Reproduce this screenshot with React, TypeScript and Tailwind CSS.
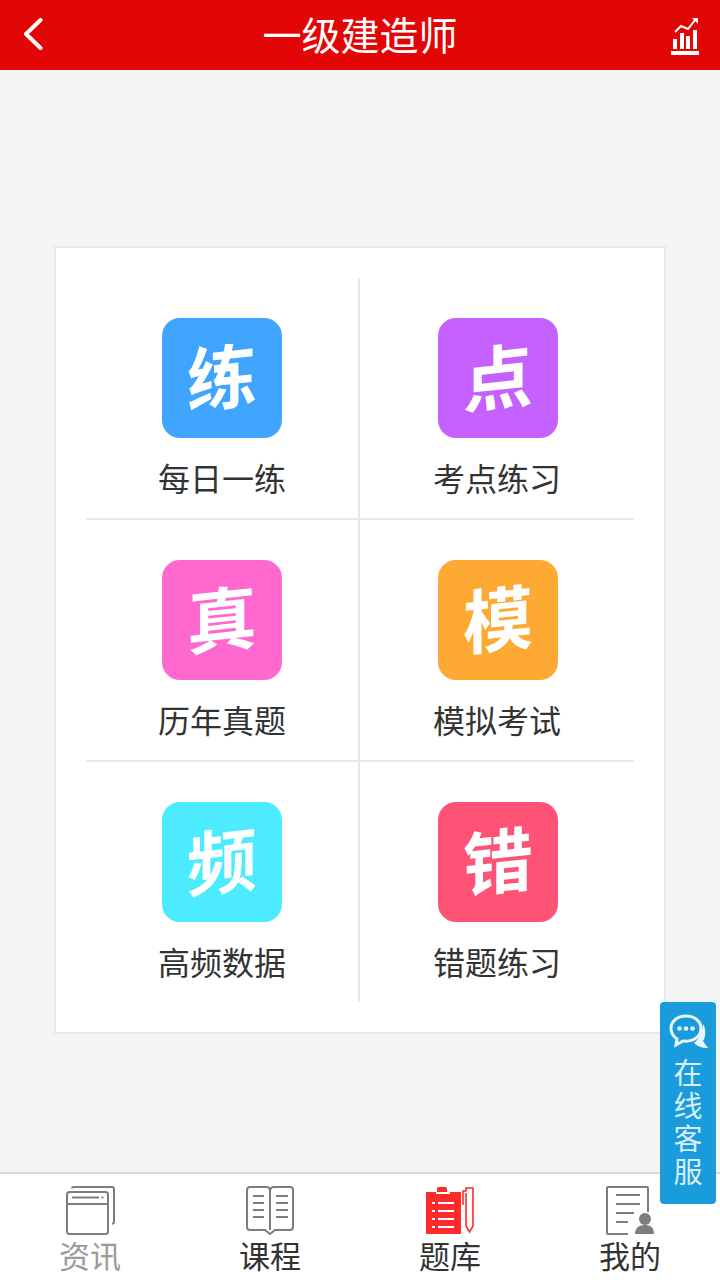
const cjk = "font-['Noto_Sans_CJK_SC','Liberation_Sans',sans-serif]";

const items = [
  { glyph: '练', label: '每日一练', color: 'bg-[#3fa5ff]' },
  { glyph: '点', label: '考点练习', color: 'bg-[#c562ff]' },
  { glyph: '真', label: '历年真题', color: 'bg-[#ff68cf]' },
  { glyph: '模', label: '模拟考试', color: 'bg-[#ffa935]' },
  { glyph: '频', label: '高频数据', color: 'bg-[#4cebff]' },
  { glyph: '错', label: '错题练习', color: 'bg-[#ff5277]' },
];

function Cell({ glyph, label, color, index }: { glyph: string; label: string; color: string; index: number }) {
  const isLeft = index % 2 === 0;
  const isLastRow = index >= 4;
  return (
    <div
      className={`flex flex-col items-center pt-10 ${isLastRow ? 'h-[240px]' : 'h-[242px] border-b-2 border-[#e8e8e8]'} ${
        isLeft ? 'w-[274px] border-r-2 border-r-[#e8e8e8]' : 'w-[274px]'
      }`}
    >
      <div className={`w-[120px] h-[120px] rounded-[18px] flex items-center justify-center pb-[8px] ${color} ${isLeft ? '' : 'ml-[2px]'}`}>
        <span className="text-white text-[70px] leading-none font-bold -skew-y-6">{glyph}</span>
      </div>
      <p className="mt-[20px] text-[32px] leading-[38px] text-[#333333]">{label}</p>
    </div>
  );
}

function NewsIcon() {
  return (
    <svg width="50" height="50" viewBox="0 0 50 50" fill="none" stroke="#7d7d7d" strokeWidth="2" className="ml-[1px]">
      <path d="M6 2.5 C6 1.6 7 1 8 1 H46 C47 1 48 2 48 3 V36 C48 37 47.5 37.5 46 38" />
      <rect x="1" y="6" width="41" height="42" rx="2.5" />
      <path d="M1 18 H42" />
      <path d="M6 11.5 H33" />
      <path d="M35.5 11.5 H37.5" />
    </svg>
  );
}

function BookIcon() {
  return (
    <svg width="48" height="50" viewBox="0 0 48 50" fill="none" stroke="#7d7d7d" strokeWidth="2">
      <path d="M24 5 C24 2 22 1 20 1 H4 C2 1 1 2 1 4 V41 C1 43 2 44 4 44 H19 L24 48 L29 44 H44 C46 44 47 43 47 41 V4 C47 2 46 1 44 1 H28 C26 1 24 2 24 5 V44" />
      <path d="M7 10 H18 M7 17 H18 M7 24 H18 M7 31 H18 M30 10 H42 M30 17 H42 M30 24 H42 M30 31 H42" />
    </svg>
  );
}

function ExamIcon() {
  return (
    <svg width="50" height="50" viewBox="0 0 50 50">
      <path d="M1 6 H12 V3 C12 1.5 13 1 14 1 H20 C21 1 22 1.5 22 3 V6 H36 V48 H1 Z" fill="#ff2a2a" />
      <path d="M11 7 H25" stroke="#fff" strokeWidth="2" />
      <path d="M7 17 H10 M13 17 H29 M7 25 H10 M13 25 H29 M7 33 H10 M13 33 H29 M7 41 H10 M13 41 H29" stroke="#fff" strokeWidth="2" />
      <path d="M41 7 V40 L44.5 46 L48 40 V2 H41 V5 H38 V19" fill="none" stroke="#ff2a2a" strokeWidth="1.6" />
    </svg>
  );
}

function MineIcon() {
  return (
    <svg width="48" height="50" viewBox="0 0 48 50" fill="none">
      <path d="M22 48 H2 C1.4 48 1 47.6 1 47 V2 C1 1.4 1.4 1 2 1 H41 C41.6 1 42 1.4 42 2 V26" stroke="#7d7d7d" strokeWidth="2" />
      <path d="M10 9 H34 M10 18 H34 M10 27 H28 M10 36 H22" stroke="#7d7d7d" strokeWidth="2" />
      <circle cx="39" cy="33" r="6" fill="#7d7d7d" />
      <path d="M29 48 C29 42 33 39 39 39 C45 39 48 42 48 48 Z" fill="#7d7d7d" />
    </svg>
  );
}

export default function App() {
  return (
    <div className={`relative w-[720px] h-[1280px] overflow-hidden flex flex-col bg-[#f4f4f4] ${cjk}`}>
      {/* 顶部 */}
      <header className="h-[70px] shrink-0 bg-[#e20606] flex items-center justify-between pl-[23px] pr-[20px]">
        <svg width="20" height="32" viewBox="0 0 20 32" fill="none" stroke="#fff" strokeWidth="4" strokeLinecap="round" strokeLinejoin="round" className="mb-[2px]">
          <path d="M17.5 2 L3 16 L17.5 30" />
        </svg>
        <h1 className="ml-[7px] text-white text-[39px] leading-none mb-[3px]">一级建造师</h1>
        <svg width="30" height="40" viewBox="0 0 30 40" fill="#fff">
          <rect x="3" y="24" width="4" height="10" />
          <rect x="10" y="18" width="4" height="16" />
          <rect x="16" y="21" width="4" height="13" />
          <rect x="23" y="15" width="4" height="19" />
          <rect x="1" y="36" width="28" height="4" />
          <path d="M5 17 L11 11 L18 14 L25 5" fill="none" stroke="#fff" strokeWidth="2" />
          <path d="M22 3 H28 V9 Z" />
        </svg>
      </header>

      {/* 题库入口 */}
      <main className="flex-1 pt-[176px] px-[54px]">
        <div className="w-[612px] h-[788px] bg-white border-2 border-[#e8e8e8] pl-[30px] pt-[30px]">
          <div className="grid grid-cols-[274px_274px] w-[548px]">
            {items.map((item, i) => (
              <Cell key={item.label} {...item} index={i} />
            ))}
          </div>
        </div>
      </main>

      {/* 在线客服 */}
      <div className="absolute left-[660px] top-[1002px] w-[56px] h-[202px] rounded-[4px] bg-[#1a9bdb] flex flex-col items-center pt-[12px]">
        <svg width="40" height="36" viewBox="0 0 40 36" fill="none" className="ml-[2px]">
          <path d="M17 2 C8 2 2 7.5 2 14.5 C2 19 4.5 22.5 8 25 L7 31 L14 27 C15 27 16 27.2 17 27.2 C26 27.2 32 21.5 32 14.5 C32 7.5 26 2 17 2 Z" stroke="#e8f6fd" strokeWidth="3" />
          <circle cx="10.5" cy="14.5" r="2.3" fill="#e8f6fd" />
          <circle cx="17" cy="14.5" r="2.3" fill="#e8f6fd" />
          <circle cx="23.5" cy="14.5" r="2.3" fill="#e8f6fd" />
          <path d="M34 10 C37 14 37 23 34 27 L39 34 C33 34 28 32 25 29 C29 26 33 20 34 10 Z" fill="#e8f6fd" />
        </svg>
        <p className="mt-[5px] w-[30px] text-center break-all text-[#d8eefa] text-[29px] leading-[33px]">在线客服</p>
      </div>

      {/* 底部导航 */}
      <nav className="h-[108px] shrink-0 bg-white border-t-2 border-[#d9d9d9] grid grid-cols-4">
        <div className="flex flex-col items-center pt-[12px]">
          <NewsIcon />
          <span className="text-[31px] leading-[38px] text-[#9a9a9a]">资讯</span>
        </div>
        <div className="flex flex-col items-center pt-[12px]">
          <BookIcon />
          <span className="text-[31px] leading-[38px] text-[#333333]">课程</span>
        </div>
        <div className="flex flex-col items-center pt-[12px]">
          <ExamIcon />
          <span className="text-[31px] leading-[38px] text-[#333333]">题库</span>
        </div>
        <div className="flex flex-col items-center pt-[12px]">
          <MineIcon />
          <span className="text-[31px] leading-[38px] text-[#333333]">我的</span>
        </div>
      </nav>
    </div>
  );
}
